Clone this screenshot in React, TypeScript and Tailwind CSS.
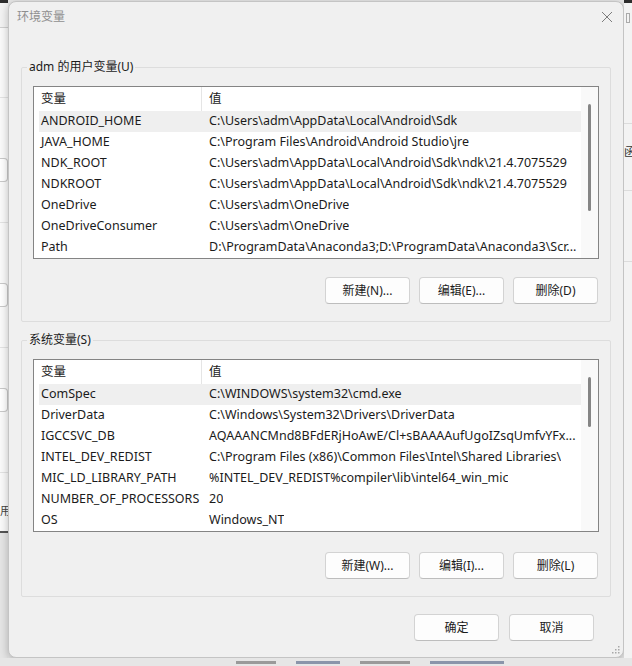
const userVars = [
  ['ANDROID_HOME', 'C:\\Users\\adm\\AppData\\Local\\Android\\Sdk'],
  ['JAVA_HOME', 'C:\\Program Files\\Android\\Android Studio\\jre'],
  ['NDK_ROOT', 'C:\\Users\\adm\\AppData\\Local\\Android\\Sdk\\ndk\\21.4.7075529'],
  ['NDKROOT', 'C:\\Users\\adm\\AppData\\Local\\Android\\Sdk\\ndk\\21.4.7075529'],
  ['OneDrive', 'C:\\Users\\adm\\OneDrive'],
  ['OneDriveConsumer', 'C:\\Users\\adm\\OneDrive'],
  ['Path', 'D:\\ProgramData\\Anaconda3;D:\\ProgramData\\Anaconda3\\Scr...'],
]

const systemVars = [
  ['ComSpec', 'C:\\WINDOWS\\system32\\cmd.exe'],
  ['DriverData', 'C:\\Windows\\System32\\Drivers\\DriverData'],
  ['IGCCSVC_DB', 'AQAAANCMnd8BFdERjHoAwE/Cl+sBAAAAufUgoIZsqUmfvYFx...'],
  ['INTEL_DEV_REDIST', 'C:\\Program Files (x86)\\Common Files\\Intel\\Shared Libraries\\'],
  ['MIC_LD_LIBRARY_PATH', '%INTEL_DEV_REDIST%compiler\\lib\\intel64_win_mic'],
  ['NUMBER_OF_PROCESSORS', '20'],
  ['OS', 'Windows_NT'],
]

function Button({ label }: { label: string }) {
  return (
    <button className="h-[27px] w-[85px] rounded-[4px] border border-[#d3d3d3] border-b-[#bdbdbd] bg-[#fdfdfd] text-[12px] text-[#1b1b1b]">
      {label}
    </button>
  )
}

function VarList({ rows, thumb }: { rows: string[][]; thumb: string }) {
  return (
    <div className="flex h-[173px] border border-[#848484] bg-white text-[12.5px]">
      <div className="flex min-w-0 flex-1 flex-col">
        <div className="flex h-[24px] items-center text-[#1b1b1b]">
          <div className="flex h-full w-[168px] items-center border-r border-[#e5e5e5] pl-[7px]">变量</div>
          <div className="pl-[7px]">值</div>
        </div>
        {rows.map(([name, value], i) => (
          <div
            key={name}
            className={
              'ml-[5px] flex h-[21px] items-center whitespace-nowrap text-[#1b1b1b] ' + (i === 0 ? 'bg-[#efefef]' : '')
            }
          >
            <div className="w-[163px] shrink-0 overflow-hidden pl-[2px]">{name}</div>
            <div className="min-w-0 overflow-hidden pl-[7px]">{value}</div>
          </div>
        ))}
      </div>
      <div className="flex w-[17px] shrink-0 justify-center bg-[#f9f9f9] pt-[17px]">
        <div className={'w-[3px] rounded-full bg-[#858585] ' + thumb} />
      </div>
    </div>
  )
}

function Group({
  title,
  rows,
  thumb,
  buttons,
  className,
  buttonGap,
}: {
  title: string
  rows: string[][]
  thumb: string
  buttons: string[]
  className: string
  buttonGap: string
}) {
  return (
    <fieldset className={'mx-[12px] rounded-[2px] border border-[#dddddd] px-[11px] pb-[17px] ' + className}>
      <legend className="ml-[-6px] px-[2px] text-[12px] leading-[16px] text-[#1b1b1b]">{title}</legend>
      <VarList rows={rows} thumb={thumb} />
      <div className={'flex justify-end gap-[9px] pr-[1px] ' + buttonGap}>
        {buttons.map((b) => (
          <Button key={b} label={b} />
        ))}
      </div>
    </fieldset>
  )
}

export default function App() {
  return (
    <div
      className="flex h-[666px] w-[632px] flex-col overflow-hidden bg-[#e8e8e8] text-[12px]"
      style={{ fontFamily: '"Noto Sans", "Noto Sans CJK SC", sans-serif' }}
    >
      <div className="flex h-[658px]">
        {/* window behind, left edge */}
        <div className="flex w-[8px] flex-col bg-[#fafafa]">
          <div className="h-[3px] bg-[#2d2d2d]" />
          <div className="h-[25px] border-b border-[#d0d0d0] bg-[#f3f3f3]" />
          <div className="h-[70px] border-b border-[#e3e3e3]" />
          <div className="mt-[60px] h-[24px] rounded-r-[4px] border border-l-0 border-[#c9c9c9] bg-white" />
          <div className="mt-[40px] h-[1px] bg-[#e3e3e3]" />
          <div className="mt-[60px] h-[24px] rounded-r-[4px] border border-l-0 border-[#c9c9c9] bg-white" />
          <div className="mt-[40px] h-[1px] bg-[#e3e3e3]" />
          <div className="mt-[40px] h-[24px] rounded-r-[4px] border border-l-0 border-[#c9c9c9] bg-white" />
          <div className="mt-[60px] h-[1px] bg-[#e3e3e3]" />
          <div className="mt-[26px] h-[24px] overflow-hidden text-[11px] leading-[24px] text-[#444]">用(</div>
          <div className="mt-[8px] h-[2px] bg-[#555]" />
          <div className="flex-1 bg-[#e5e5e5]" />
        </div>

        {/* dialog */}
        <div className="mt-[1px] flex w-[616px] flex-col rounded-[8px] border border-[#c4c4c4] bg-[#f0f0f0] shadow-[0_2px_8px_rgba(0,0,0,0.25)]">
          <div className="flex h-[30px] items-center justify-between pl-[8px] pr-[10px]">
            <span className="text-[12px] text-[#8f8f8f]">环境变量</span>
            <svg width="12" height="12" viewBox="0 0 12 12">
              <path d="M1 1 L11 11 M11 1 L1 11" stroke="#7c7c7c" strokeWidth="1" />
            </svg>
          </div>
          <Group
            title="adm 的用户变量(U)"
            rows={userVars}
            thumb="h-[107px]"
            buttons={['新建(N)...', '编辑(E)...', '删除(D)']}
            className="mt-[27px] pt-[11px]"
            buttonGap="mt-[18px]"
          />
          <Group
            title="系统变量(S)"
            rows={systemVars}
            thumb="h-[50px]"
            buttons={['新建(W)...', '编辑(I)...', '删除(L)']}
            className="mt-[10px] pt-[11px]"
            buttonGap="mt-[20px]"
          />
          <div className="mt-[17px] flex justify-end gap-[10px] pr-[29px]">
            <Button label="确定" />
            <Button label="取消" />
          </div>
          <div className="mt-auto flex justify-end pb-[3px] pr-[3px]">
            <svg width="8" height="8" viewBox="0 0 8 8" fill="#a8a8a8">
              <rect x="6" y="0" width="1.5" height="1.5" />
              <rect x="3" y="3" width="1.5" height="1.5" />
              <rect x="6" y="3" width="1.5" height="1.5" />
              <rect x="0" y="6" width="1.5" height="1.5" />
              <rect x="3" y="6" width="1.5" height="1.5" />
              <rect x="6" y="6" width="1.5" height="1.5" />
            </svg>
          </div>
        </div>

        {/* window behind, right edge */}
        <div className="flex w-[8px] flex-col bg-[#f3f3f3]">
          <div className="h-[3px] bg-[#2d2d2d]" />
          <div className="mt-[10px] ml-[2px] h-[10px] w-[4px] border border-[#aaa]" />
          <div className="mt-[100px] h-[1px] bg-[#dcdcdc]" />
          <div className="mt-[20px] overflow-hidden whitespace-nowrap text-[12px] leading-[16px] text-[#333]">函</div>
          <div className="mt-[30px] h-[1px] bg-[#dcdcdc]" />
          <div className="mt-[70px] h-[1px] bg-[#dcdcdc]" />
          <div className="flex-1" />
        </div>
      </div>

      {/* window behind, bottom edge */}
      <div className="flex h-[8px] items-center gap-[20px] bg-[#e6e6e6] pl-[236px]">
        <div className="h-[3px] w-[40px] bg-[#9a9a9a]" />
        <div className="h-[3px] w-[44px] bg-[#8a95aa]" />
        <div className="h-[3px] w-[50px] bg-[#9a9a9a]" />
        <div className="h-[3px] w-[74px] bg-[#8a95aa]" />
      </div>
    </div>
  )
}
